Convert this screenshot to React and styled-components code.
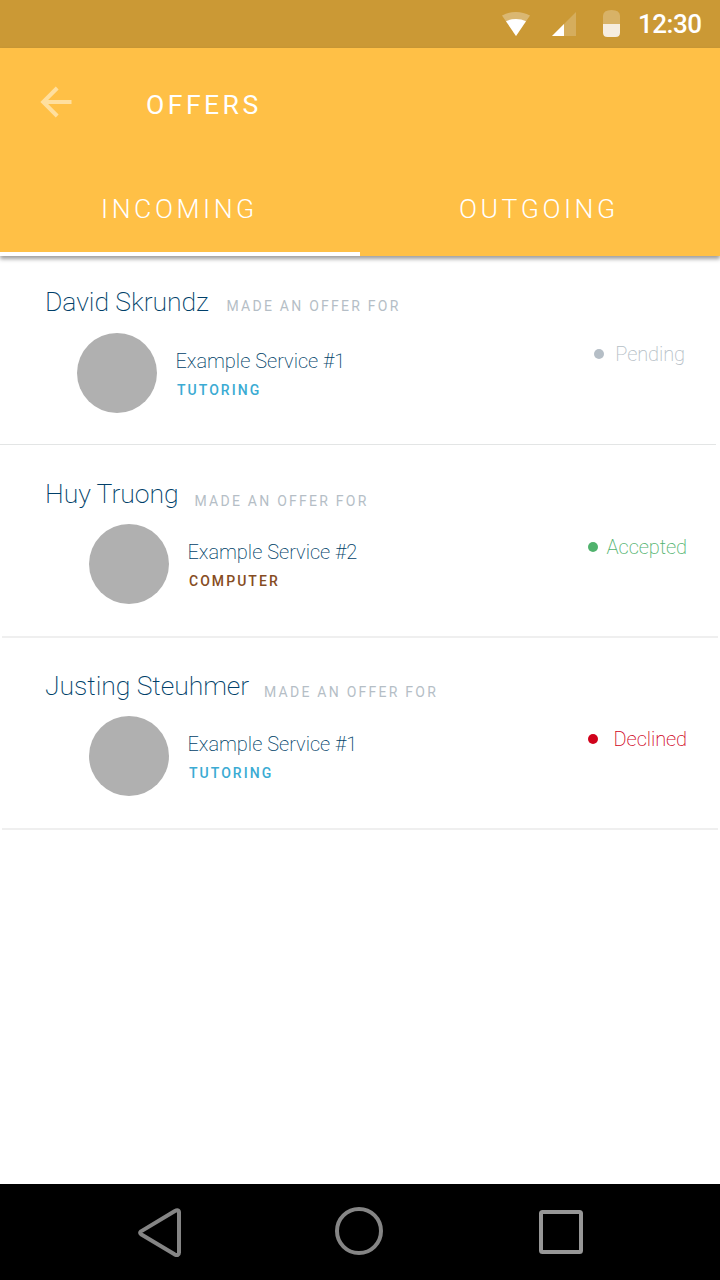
import React from "react";
import styled, { createGlobalStyle } from "styled-components";

const GlobalStyle = createGlobalStyle`
  * { box-sizing: border-box; }
  body {
    margin: 0;
    background: #fff;
    font-family: Roboto, "Liberation Sans", sans-serif;
  }
`;

const Screen = styled.div`
  display: flex;
  flex-direction: column;
  width: 720px;
  height: 1280px;
  overflow: hidden;
  background: #fff;
`;

const StatusBar = styled.div`
  display: flex;
  align-items: center;
  justify-content: flex-end;
  flex: none;
  height: 48px;
  padding-right: 18px;
  background: #cb9935;

  svg { display: block; }
`;

const Clock = styled.span`
  width: 64px;
  margin-left: 17px;
  font-size: 26px;
  font-weight: 500;
  line-height: 48px;
  letter-spacing: -0.5px;
  white-space: nowrap;
  color: #fff;
`;

const Header = styled.header`
  flex: none;
  height: 208px;
  background: #ffc046;
  box-shadow: 0 3px 4px rgba(0, 0, 0, 0.38);
`;

const Toolbar = styled.div`
  display: flex;
  align-items: flex-start;
  height: 112px;
  padding: 38px 0 0 40px;
`;

const Title = styled.h1`
  margin: 3px 0 0 73px;
  font-size: 26.6px;
  font-weight: 400;
  line-height: 32px;
  letter-spacing: 3.45px;
  color: #fff;
`;

const Tabs = styled.nav`
  display: grid;
  grid-template-columns: 1fr 1fr;
  height: 96px;
`;

const Tab = styled.div`
  padding: 33px 0 0 ${(p) => p.$inset}px;
  border-bottom: 4px solid ${(p) => (p.$active ? "#fff" : "transparent")};
  font-size: 26.6px;
  font-weight: 300;
  line-height: 32px;
  letter-spacing: 3.55px;
  white-space: nowrap;
  color: #fff;
`;

const List = styled.main`
  flex: 1;
`;

const Offer = styled.article`
  display: flex;
  flex-direction: column;
  height: ${(p) => p.$height}px;
  padding-top: ${(p) => p.$top}px;
`;

const OfferHead = styled.div`
  display: flex;
  align-items: flex-start;
  height: 32px;
  padding-left: 45px;
  white-space: nowrap;
`;

const Name = styled.span`
  width: ${(p) => p.$width}px;
  font-size: 26.6px;
  font-weight: 200;
  line-height: 34px;
  letter-spacing: -0.08px;
  color: #003f69;
`;

const Action = styled.span`
  margin-top: ${(p) => p.$drop}px;
  font-size: 14px;
  line-height: 16px;
  letter-spacing: 2.25px;
  color: #b5bec6;
`;

const OfferBody = styled.div`
  display: flex;
  align-items: flex-start;
  flex: 1;
  margin-top: ${(p) => p.$gap}px;
  padding: 0 ${(p) => p.$right}px 0 ${(p) => p.$left}px;
`;

const Avatar = styled.div`
  flex: none;
  width: 80px;
  height: 80px;
  border-radius: 50%;
  background: #b0b0b0;
`;

const Details = styled.div`
  flex: 1;
  padding: 16px 0 0 18.4px;
`;

const Service = styled.div`
  font-size: 20px;
  font-weight: 200;
  line-height: 24px;
  white-space: nowrap;
  color: #003f69;
`;

const Category = styled.div`
  margin: 9px 0 0 1.6px;
  font-size: 14px;
  font-weight: 500;
  line-height: 16px;
  letter-spacing: 2.05px;
  color: ${(p) => p.$color};
`;

const Status = styled.div`
  display: flex;
  align-items: center;
  gap: ${(p) => p.$gap}px;
  margin-top: ${(p) => p.$drop}px;
  font-size: 20px;
  font-weight: 200;
  line-height: 24px;
  letter-spacing: -0.1px;
  color: ${(p) => p.$color};

  &::before {
    content: "";
    width: 10px;
    height: 10px;
    border-radius: 50%;
    background: currentColor;
  }
`;

const Divider = styled.div`
  height: ${(p) => p.$size}px;
  margin: 0 ${(p) => p.$right}px 0 ${(p) => p.$left}px;
  background: ${(p) => p.$color};
`;

const NavBar = styled.footer`
  display: flex;
  align-items: flex-start;
  justify-content: space-between;
  flex: none;
  height: 96px;
  padding: 22px 136px 0 136px;
  background: #000;
`;

const offers = [
  {
    name: "David Skrundz", nameWidth: 181.5, service: "Example Service #1",
    category: "TUTORING", categoryColor: "#3babd3",
    status: "Pending", statusColor: "#b5bec6", statusGap: 11.5, statusDrop: 9,
    height: 188, top: 29, drop: 13, gap: 16, left: 77, right: 35,
    line: { $size: 1, $left: 0, $right: 4, $color: "#e3e5e5" },
  },
  {
    name: "Huy Truong", nameWidth: 149.5, service: "Example Service #2",
    category: "COMPUTER", categoryColor: "#864c22",
    status: "Accepted", statusColor: "#50b26d", statusGap: 8.2, statusDrop: 11,
    height: 191, top: 32, drop: 16, gap: 15, left: 89, right: 33,
    line: { $size: 2, $left: 2, $right: 2, $color: "#efefef" },
  },
  {
    name: "Justing Steuhmer", nameWidth: 219, service: "Example Service #1",
    category: "TUTORING", categoryColor: "#3babd3",
    status: "Declined", statusColor: "#d0021b", statusGap: 15.7, statusDrop: 11,
    height: 190, top: 31, drop: 15, gap: 15, left: 89, right: 33,
    line: { $size: 2, $left: 2, $right: 2, $color: "#efefef" },
  },
];

function StatusIcons() {
  return (
    <svg width="120" height="28" viewBox="501 10 120 28">
      <path d="M516 36L502 15.5Q508.500 12 516 12T530 15.500Z" fill="#fff" fillOpacity="0.3" />
      <path d="M516 36L506 21.200Q510.500 19 516 19T526 21.200Z" fill="#fff" />
      <path d="M552 36L576 12V36Z" fill="#fff" fillOpacity="0.2" />
      <path d="M552 36L564 24V36Z" fill="#fff" />
      <path d="M603 24V16Q603 10 611.500 10T620 16V24Z" fill="#fff" fillOpacity="0.25" />
      <path d="M603 24H620V32.500Q620 37 615.500 37H607.500Q603 37 603 32.500Z" fill="#f6ede0" />
    </svg>
  );
}

function BackArrow() {
  return (
    <svg width="33" height="32" viewBox="40 86 33 32" fill="none" stroke="#ffdf9e" strokeWidth="4">
      <path d="M57.200 88L43.200 102L57.200 116M43.200 102H71.500" />
    </svg>
  );
}

export default function App() {
  return (
    <>
      <GlobalStyle />
      <Screen>
        <StatusBar>
          <StatusIcons />
          <Clock>12:30</Clock>
        </StatusBar>
        <Header>
          <Toolbar>
            <BackArrow />
            <Title>OFFERS</Title>
          </Toolbar>
          <Tabs>
            <Tab $active $inset={101}>INCOMING</Tab>
            <Tab $inset={99}>OUTGOING</Tab>
          </Tabs>
        </Header>
        <List>
          {offers.map((o) => (
            <React.Fragment key={o.name}>
              <Offer $height={o.height} $top={o.top}>
                <OfferHead>
                  <Name $width={o.nameWidth}>{o.name}</Name>
                  <Action $drop={o.drop}>MADE AN OFFER FOR</Action>
                </OfferHead>
                <OfferBody $gap={o.gap} $left={o.left} $right={o.right}>
                  <Avatar />
                  <Details>
                    <Service>{o.service}</Service>
                    <Category $color={o.categoryColor}>{o.category}</Category>
                  </Details>
                  <Status $color={o.statusColor} $gap={o.statusGap} $drop={o.statusDrop}>
                    {o.status}
                  </Status>
                </OfferBody>
              </Offer>
              <Divider {...o.line} />
            </React.Fragment>
          ))}
        </List>
        <NavBar>
          <svg width="48" height="54" viewBox="136 1206 48 54" fill="none" stroke="#858585" strokeWidth="4" strokeLinejoin="round">
            <path d="M141 1231.400Q139.200 1232.800 141 1234.200L174.500 1254.300Q179 1256.300 179 1252.500V1212.500Q179 1208.800 174.500 1211.200Z" />
          </svg>
          <svg width="54" height="54" viewBox="334 1206 54 54" fill="none" stroke="#858585" strokeWidth="4">
            <circle cx="359" cy="1231" r="22" />
          </svg>
          <svg width="46" height="54" viewBox="538 1206 46 54" fill="none" stroke="#979797" strokeWidth="4">
            <rect x="541" y="1212" width="40" height="40" rx="1.5" />
          </svg>
        </NavBar>
      </Screen>
    </>
  );
}
